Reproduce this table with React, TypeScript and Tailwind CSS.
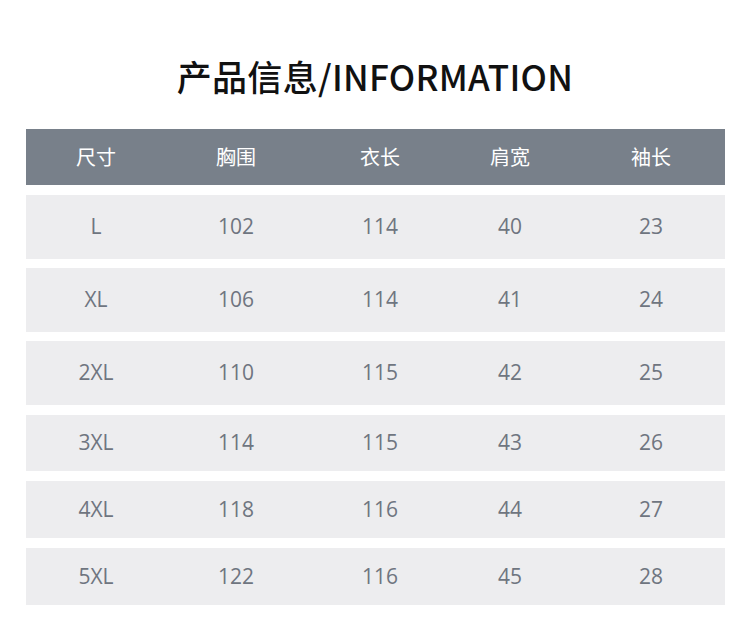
import React from "react";

const columns = ["尺寸", "胸围", "衣长", "肩宽", "袖长"];

const rows = [
  { cells: ["L", "102", "114", "40", "23"], cls: "h-[64px] mt-[10px]" },
  { cells: ["XL", "106", "114", "41", "24"], cls: "h-[64px] mt-[9px]" },
  { cells: ["2XL", "110", "115", "42", "25"], cls: "h-[64px] mt-[9px]" },
  { cells: ["3XL", "114", "115", "43", "26"], cls: "h-[56px] mt-[10px]" },
  { cells: ["4XL", "118", "116", "44", "27"], cls: "h-[57px] mt-[10px]" },
  { cells: ["5XL", "122", "116", "45", "28"], cls: "h-[57px] mt-[10px]" },
];

// column widths are uneven in the design, so spell them out
const gridCols = "grid grid-cols-[140px_140px_148px_112px_159px] items-center";

const App: React.FC = () => {
  return (
    <div className="w-[750px] h-[628px] bg-white overflow-hidden">
      {/* Title */}
      <h1 className="pt-[58px] h-[96px] text-center text-[35px] leading-none font-medium tracking-[0.3px] text-[#111] font-['Noto_Sans_CJK_SC','Noto_Sans',sans-serif]">
        产品信息/INFORMATION
      </h1>

      {/* Size table */}
      <div className="ml-[26px] w-[699px] mt-[33px]">
        <div
          className={`${gridCols} h-[56px] bg-[#78808a] text-white text-[20px] font-['Noto_Sans_CJK_SC',sans-serif]`}
        >
          {columns.map((c, i) => (
            <div key={c} className={`text-center ${i === 4 ? "pl-[11px]" : ""}`}>
              {c}
            </div>
          ))}
        </div>

        {rows.map((row) => (
          <div
            key={row.cells[0]}
            className={`${gridCols} ${row.cls} bg-[#ededef] text-[#6f7580] text-[21px] font-['Open_Sans',sans-serif]`}
          >
            {row.cells.map((v, i) => (
              <div key={i} className={`text-center ${i === 4 ? "pl-[11px]" : ""}`}>
                {v}
              </div>
            ))}
          </div>
        ))}
      </div>
    </div>
  );
};

export default App;
